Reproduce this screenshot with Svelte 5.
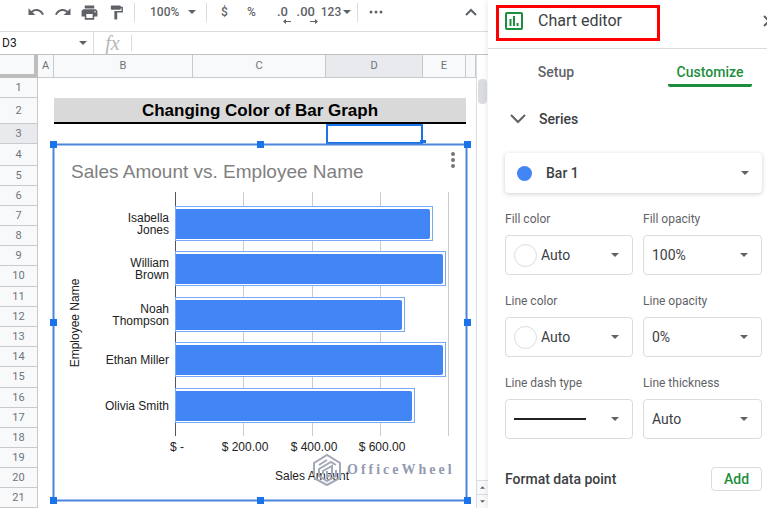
<script>
	const columns = [
		{ label: 'A', width: 16 },
		{ label: 'B', width: 139 },
		{ label: 'C', width: 133 },
		{ label: 'D', width: 97 },
		{ label: 'E', width: 43 },
		{ label: '', width: null }
	];

	const rowHeights = [20, 26, 20, 22, 20, 20, 20, 20, 20, 21, 20, 20, 20, 20, 21, 20, 20, 20, 20, 20, 20];

	const employees = [
		{ name: ['Isabella', 'Jones'], sales: 747 },
		{ name: ['William', 'Brown'], sales: 785 },
		{ name: ['Noah', 'Thompson'], sales: 666 },
		{ name: ['Ethan Miller'], sales: 785 },
		{ name: ['Olivia Smith'], sales: 694 }
	];

	const ticks = [
		{ value: 0, label: '$ -' },
		{ value: 200, label: '$ 200.00' },
		{ value: 400, label: '$ 400.00' },
		{ value: 600, label: '$ 600.00' },
		{ value: 800, label: '' }
	];

	// Plot area inside the chart
	const plot = { left: 126, top: 52, bottom: 296 };
	const xAt = (value) => plot.left + Math.round((value / 800) * 273);

	const bars = employees.map((e, i) => {
		const y = Math.round(66 + i * 45.4);
		return { ...e, y, width: xAt(e.sales) - plot.left, middle: y + 17 };
	});

	const handles = [
		[4, 4], [211, 4], [418, 4],
		[4, 182], [418, 182],
		[4, 360], [211, 360], [418, 360]
	];

	const fields = [
		{ id: 'fill-color', label: 'Fill color', value: 'Auto', kind: 'color' },
		{ id: 'fill-opacity', label: 'Fill opacity', value: '100%' },
		{ id: 'line-color', label: 'Line color', value: 'Auto', kind: 'color' },
		{ id: 'line-opacity', label: 'Line opacity', value: '0%' },
		{ id: 'line-dash', label: 'Line dash type', value: 'Solid', kind: 'dash' },
		{ id: 'line-thickness', label: 'Line thickness', value: 'Auto' }
	];

	let cellName = $state('D3');
</script>

{#snippet caret()}
	<svg class="caret" width="8" height="4" viewBox="0 0 8 4" aria-hidden="true"><path d="M0 0h8L4 4z" /></svg>
{/snippet}

<div class="app">
	<main class="sheet">
		<div class="toolbar">
			<button class="tool" aria-label="Undo">
				<svg width="18" height="18" viewBox="0 0 24 24"><path d="M12.5 8c-2.65 0-5.05.99-6.9 2.6L2 7v9h9l-3.62-3.62c1.39-1.16 3.16-1.88 5.12-1.88 3.54 0 6.55 2.31 7.6 5.5l2.37-.78C21.08 11.03 17.15 8 12.5 8z" /></svg>
			</button>
			<button class="tool" aria-label="Redo">
				<svg width="18" height="18" viewBox="0 0 24 24"><path d="M18.4 10.6C16.55 8.99 14.15 8 11.5 8c-4.65 0-8.58 3.03-9.96 7.22L3.9 16c1.05-3.19 4.05-5.5 7.6-5.5 1.95 0 3.73.72 5.12 1.88L13 16h9V7l-3.6 3.6z" /></svg>
			</button>
			<button class="tool" aria-label="Print">
				<svg width="19" height="19" viewBox="0 0 24 24"><path d="M19 8H5c-1.66 0-3 1.34-3 3v6h4v4h12v-4h4v-6c0-1.66-1.34-3-3-3zm-3 11H8v-5h8v5zm3-7c-.55 0-1-.45-1-1s.45-1 1-1 1 .45 1 1-.45 1-1 1zm-1-9H6v4h12V3z" /></svg>
			</button>
			<button class="tool" aria-label="Paint format">
				<svg width="17" height="17" viewBox="0 0 24 24"><path d="M18 4V3c0-.55-.45-1-1-1H5c-.55 0-1 .45-1 1v4c0 .55.45 1 1 1h12c.55 0 1-.45 1-1V6h1v4H9v11c0 .55.45 1 1 1h2c.55 0 1-.45 1-1v-9h8V4h-3z" /></svg>
			</button>
			<span class="divider"></span>
			<label class="zoom">
				<select aria-label="Zoom"><option>100%</option></select>
				{@render caret()}
			</label>
			<span class="divider"></span>
			<button class="tool">$</button>
			<button class="tool">%</button>
			<button class="tool decimals" aria-label="Decrease decimal places">
				.0
				<svg width="8" height="5" viewBox="0 0 8 5"><path d="M3 0v2h5v1H3v2L0 2.500z" /></svg>
			</button>
			<button class="tool decimals" aria-label="Increase decimal places">
				.00
				<svg width="8" height="5" viewBox="0 0 8 5"><path d="M5 0v2H0v1h5v2l3-2.500z" /></svg>
			</button>
			<button class="tool formats">123{@render caret()}</button>
			<span class="divider"></span>
			<button class="tool" aria-label="More">
				<svg width="14" height="4" viewBox="0 0 14 4"><circle cx="2" cy="2" r="1.500" /><circle cx="7" cy="2" r="1.500" /><circle cx="12" cy="2" r="1.500" /></svg>
			</button>
			<button class="tool collapse" aria-label="Hide menus">
				<svg width="12" height="8" viewBox="0 0 12 8"><path class="stroke" d="M1 7l5-5 5 5" /></svg>
			</button>
		</div>

		<div class="formula-bar">
			<label class="name-box">
				<input aria-label="Cell name" bind:value={cellName} />
				{@render caret()}
			</label>
			<span class="fx">fx</span>
			<input class="formula" aria-label="Formula" />
		</div>

		<div class="grid">
			<table>
				<colgroup>
					<col style="width: 38px" />
					{#each columns as column}
						<col style={column.width ? `width: ${column.width}px` : ''} />
					{/each}
				</colgroup>
				<thead>
					<tr>
						<th class="corner" aria-label="Select all"></th>
						{#each columns as column}
							<th scope="col" class:selected={column.label === 'D'}>{column.label}</th>
						{/each}
					</tr>
				</thead>
				<tbody>
					{#each rowHeights as height, i}
						<tr style="height: {height}px">
							<th scope="row" class:selected={i === 2}>{i + 1}</th>
							{#if i === 1}
								<td></td>
								<td class="title" colspan="4">Changing Color of Bar Graph</td>
								<td></td>
							{:else}
								{#each columns as column}
									<td class:active={i === 2 && column.label === 'D'}></td>
								{/each}
							{/if}
						</tr>
					{/each}
				</tbody>
			</table>

			<div class="scrollbar">
				<span class="thumb"></span>
				<button aria-label="Scroll up"><svg width="5" height="3" viewBox="0 0 6 3"><path d="M0 3h6L3 0z" /></svg></button>
				<button aria-label="Scroll down"><svg width="5" height="3" viewBox="0 0 6 3"><path d="M0 0h6L3 3z" /></svg></button>
			</div>

			<svg class="chart" width="423" height="366" viewBox="0 0 423 366" role="img" aria-label="Sales Amount vs. Employee Name">
				<rect class="handle" x="371" y="0" width="6" height="3" />
				<rect class="frame" x="4.500" y="4.500" width="413" height="356" />
				<text class="chart-title" x="22" y="38">Sales Amount vs. Employee Name</text>

				{#each ticks as tick}
					<line class="gridline" class:axis={tick.value === 0} x1={xAt(tick.value) + 0.5} x2={xAt(tick.value) + 0.5} y1={plot.top} y2={plot.bottom} />
					<text class="tick" x={xAt(tick.value) + 2} y="311">{tick.label}</text>
				{/each}

				{#each bars as bar}
					<rect class="halo" x={plot.left + 0.5} y={bar.y + 0.5} width={bar.width + 2} height="34" />
					<path class="bar" d="M{plot.left + 1} {bar.y + 3}h{bar.width - 3}q2 0 2 2v26q0 2-2 2h-{bar.width - 3}z" />
					<text class="name" y={bar.middle + 5 - (bar.name.length - 1) * 6}>
						{#each bar.name as part, i}
							<tspan x="120" dy={i * 12}>{part}</tspan>
						{/each}
					</text>
				{/each}

				<text class="axis-title" x="263" y="340">Sales Amount</text>
				<text class="axis-title" transform="translate(30 183) rotate(-90)">Employee Name</text>

				<g class="menu-dots">
					<circle cx="404" cy="14" r="2" />
					<circle cx="404" cy="20" r="2" />
					<circle cx="404" cy="26" r="2" />
				</g>

				<g class="watermark">
					<path d="M265 335v-12l13-8 13 8v15l-13 7-13-7" />
					<path d="M287 325l-5-3-12 7v7l8 5 9-5v-6" />
					<path d="M270 325l8-5M274 334v-3l9-5v8l-5 3v-6" />
					<text x="298" y="334">OfficeWheel</text>
				</g>

				{#each handles as [x, y]}
					<rect class="handle" x={x - 3} y={y - 3} width="7" height="7" />
				{/each}
			</svg>
		</div>
	</main>

	<aside class="editor">
		<header>
			<h1>
				<svg width="18" height="18" viewBox="0 0 18 18" aria-hidden="true">
					<rect x="1" y="1" width="16" height="16" rx="1" />
					<path d="M5.500 7v7M9 4v10M12.500 11v3" />
				</svg>
				Chart editor
			</h1>
			<button class="close" aria-label="Close">
				<svg width="12" height="12" viewBox="0 0 12 12"><path class="stroke" d="M1 1l10 10M11 1L1 11" /></svg>
			</button>
		</header>

		<div class="tabs" role="tablist">
			<button role="tab" aria-selected="false">Setup</button>
			<button role="tab" aria-selected="true" class="current">Customize</button>
		</div>

		<button class="section" aria-expanded="true">
			<svg width="16" height="10" viewBox="0 0 16 10"><path class="stroke" d="M1 1l7 7 7-7" /></svg>
			Series
		</button>

		<div class="body">
			<label class="series">
				<span class="dot"></span>
				<select aria-label="Series"><option>Bar 1</option></select>
				{@render caret()}
			</label>

			<div class="fields">
				{#each fields as field}
					<div class="field">
						<label for={field.id}>{field.label}</label>
						<div class="box">
							{#if field.kind === 'color'}
								<span class="swatch"></span>
							{:else if field.kind === 'dash'}
								<span class="dash"></span>
							{/if}
							<select id={field.id}>
								{#if field.kind === 'dash'}
									<option value="solid" aria-label={field.value}></option>
								{:else}
									<option>{field.value}</option>
								{/if}
							</select>
							{@render caret()}
						</div>
					</div>
				{/each}
			</div>

			<div class="data-point">
				<span>Format data point</span>
				<button>Add</button>
			</div>
		</div>
	</aside>
</div>

<style>
	:global(body) {
		margin: 0;
	}

	.app {
		display: flex;
		height: 100vh;
		overflow: hidden;
		background: #fff;
		color: #3c4043;
		font-family: Roboto, 'Liberation Sans', sans-serif;
		font-size: 12px;
	}

	button,
	input,
	select {
		margin: 0;
		padding: 0;
		border: 0;
		background: none;
		color: inherit;
		font: inherit;
		appearance: none;
		outline: none;
	}

	svg {
		flex-shrink: 0;
		fill: #5f6368;
	}

	.stroke {
		fill: none;
		stroke: #5f6368;
		stroke-width: 2;
	}

	.sheet {
		flex: 1;
		min-width: 0;
		display: flex;
		flex-direction: column;
	}

	/* Toolbar */
	.toolbar {
		display: flex;
		align-items: center;
		height: 24px;
		padding: 0 4px 7px 22px;
		border-bottom: 1px solid #dadce0;
		color: #5f6368;
		font-weight: 500;
	}

	.tool {
		display: flex;
		align-items: center;
		justify-content: center;
		width: 27px;
		height: 24px;
	}

	.divider {
		width: 1px;
		height: 19px;
		margin: 0 4px;
		background: #dadce0;
	}

	.zoom {
		display: flex;
		align-items: center;
		justify-content: space-between;
		width: 46px;
		padding: 0 6px 0 11px;
	}

	.decimals {
		flex-direction: column;
		align-items: flex-end;
		padding: 5px 4px 0 0;
		box-sizing: border-box;
		font-size: 13px;
		line-height: 14px;
	}

	.decimals svg {
		margin-right: -3px;
	}

	.formats {
		gap: 2px;
		width: 34px;
	}

	.collapse {
		margin-left: auto;
	}

	/* Formula bar */
	.formula-bar {
		display: flex;
		align-items: center;
		height: 22px;
		border-bottom: 1px solid #c0c0c0;
	}

	.name-box {
		display: flex;
		align-items: center;
		width: 85px;
		height: 22px;
		padding: 0 6px 0 2px;
		border-right: 1px solid #dadce0;
		color: #202124;
	}

	.name-box input {
		flex: 1;
		min-width: 0;
	}

	.fx {
		width: 37px;
		color: #b5b8bb;
		font: italic 20px/20px 'Liberation Serif', serif;
		text-align: center;
	}

	.formula {
		flex: 1;
		min-width: 0;
		height: 16px;
		border-left: 1px solid #dadce0;
	}

	/* Grid */
	.grid {
		position: relative;
		flex: 1;
		min-height: 0;
		display: flex;
		overflow: hidden;
	}

	table {
		flex: 1;
		align-self: flex-start;
		width: 0;
		table-layout: fixed;
		border-spacing: 0;
		border-right: 1px solid #dadce0;
	}

	th,
	td {
		box-sizing: border-box;
		padding: 0;
	}

	th {
		border-right: 1px solid #c8cacc;
		border-bottom: 1px solid #c8cacc;
		background: #f8f9fa;
		color: #6f7479;
		font-size: 11px;
		font-weight: 400;
		line-height: 14px;
	}

	thead th {
		height: 23px;
	}

	th.selected {
		background: #e8eaed;
	}

	.corner {
		border-right: 4px solid #bdbdbd;
		border-bottom: 4px solid #bdbdbd;
	}

	.title {
		padding-top: 2px;
		border-bottom: 2px solid #000;
		background: #d9d9d9;
		color: #000;
		font: bold 17px/20px 'Liberation Sans', Arial, sans-serif;
		text-align: center;
	}

	.active {
		border: 2px solid #1a73e8;
	}

	.scrollbar {
		display: flex;
		flex-direction: column;
		align-items: center;
		width: 11px;
		padding-top: 24px;
	}

	.thumb {
		width: 9px;
		height: 25px;
		margin-bottom: auto;
		border-radius: 4px;
		background: #dadce0;
	}

	.scrollbar button {
		display: flex;
		align-items: center;
		justify-content: center;
		width: 11px;
		height: 14px;
		border-top: 1px solid #dadce0;
		background: #f8f9fa;
	}

	/* The chart floats over the cells */
	.chart {
		position: absolute;
		top: 85px;
		left: 49px;
		font-family: 'Liberation Sans', Arial, sans-serif;
		font-size: 12px;
	}

	.frame {
		fill: #fff;
		stroke: #4a86dc;
		stroke-width: 2;
	}

	.handle {
		fill: #1a73e8;
	}

	.chart-title {
		fill: #808080;
		font-size: 19px;
	}

	.gridline {
		stroke: #ccc;
	}

	.gridline.axis {
		stroke: #555;
	}

	.halo {
		fill: #fff;
		stroke: #78a8f8;
	}

	.bar {
		fill: #4285f4;
	}

	.tick,
	.axis-title {
		fill: #222;
		text-anchor: middle;
	}

	.name {
		fill: #222;
		text-anchor: end;
	}

	.menu-dots {
		fill: #757575;
	}

	.watermark path {
		fill: none;
		stroke: #a3a9b8;
		stroke-width: 2;
	}

	.watermark text {
		fill: #929bb0;
		font-family: 'Liberation Serif', serif;
		font-size: 14px;
		font-weight: 700;
		letter-spacing: 3px;
	}

	/* Chart editor */
	.editor {
		position: relative;
		flex: 0 0 279px;
		overflow: hidden;
		background: #fff;
		box-shadow: 0 0 6px rgba(60, 64, 67, 0.15);
	}

	header {
		display: flex;
		align-items: flex-start;
		height: 43px;
		padding: 5px 0 0 8px;
		border-bottom: 1px solid #dadce0;
	}

	h1 {
		display: flex;
		flex-shrink: 0;
		align-items: center;
		gap: 15px;
		box-sizing: border-box;
		width: 164px;
		height: 36px;
		margin: 0;
		padding: 0 0 4px 6px;
		border: 3px solid #f00;
		font-size: 16px;
		font-weight: 400;
		line-height: 20px;
	}

	h1 svg {
		fill: none;
		stroke: #1e8e3e;
		stroke-width: 2;
	}

	.close {
		flex-shrink: 0;
		height: 34px;
		margin-left: 103px;
	}

	.tabs {
		display: flex;
		justify-content: space-between;
		padding: 0 15px 0 26px;
		font-size: 14px;
		font-weight: 500;
	}

	.tabs button {
		width: 84px;
		height: 38px;
		padding-top: 10px;
		border-bottom: 3px solid transparent;
		border-radius: 2px;
		color: #5f6368;
	}

	.tabs .current {
		border-color: #1e8e3e;
		color: #1e8e3e;
	}

	.section {
		display: flex;
		align-items: center;
		gap: 13px;
		width: 100%;
		height: 66px;
		padding: 0 0 2px 22px;
		box-sizing: border-box;
		font-size: 14px;
		font-weight: 500;
	}

	.body {
		padding: 0 5px 0 17px;
	}

	.series {
		display: flex;
		align-items: center;
		height: 40px;
		padding: 0 13px 0 12px;
		border-radius: 4px;
		box-shadow: 0 1px 4px rgba(60, 64, 67, 0.25);
		font-size: 14px;
		font-weight: 500;
	}

	.series select,
	.box select {
		flex: 1;
		min-width: 0;
	}

	.dot {
		width: 15px;
		height: 15px;
		margin-right: 14px;
		border-radius: 50%;
		background: #4285f4;
	}

	.fields {
		display: grid;
		grid-template-columns: 128fr 119fr;
		gap: 18px 10px;
		padding-top: 18px;
	}

	.field label {
		display: block;
		padding-bottom: 8px;
		color: #5f6368;
		line-height: 16px;
	}

	.box {
		display: flex;
		align-items: center;
		box-sizing: border-box;
		height: 40px;
		padding: 0 13px 0 8px;
		border: 1px solid #dadce0;
		border-radius: 4px;
		font-size: 14px;
	}

	.box select {
		height: 100%;
	}

	.swatch {
		box-sizing: border-box;
		width: 23px;
		height: 23px;
		margin-right: 4px;
		border: 1px solid #dadce0;
		border-radius: 50%;
	}

	.dash {
		width: 72px;
		height: 2px;
		background: #202124;
	}

	.data-point {
		display: flex;
		align-items: center;
		justify-content: space-between;
		padding-top: 28px;
		font-size: 14px;
		font-weight: 500;
	}

	.data-point button {
		box-sizing: border-box;
		width: 51px;
		height: 24px;
		border: 1px solid #dadce0;
		border-radius: 4px;
		color: #1e8e3e;
	}
</style>
